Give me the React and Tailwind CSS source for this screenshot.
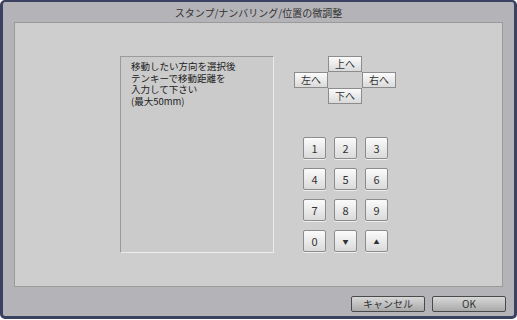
export default function App() {
  const font = { fontFamily: '"Noto Sans CJK JP", "DejaVu Sans", sans-serif' };
  const keyCls =
    "w-[23px] h-[22px] flex items-center justify-center text-[11px] text-[#333] rounded-[2px] border border-[#8c8c8c] bg-gradient-to-b from-[#fbfbfb] to-[#dadada] shadow-[0_1px_0_#eeeeee]";
  const dirCls =
    "w-[34px] h-[16px] flex items-center justify-center text-[10px] leading-none text-[#333] border border-[#8c8c8c] bg-gradient-to-b from-[#fbfbfb] to-[#dadada]";
  const bottomCls =
    "w-[74px] h-[16px] flex items-center justify-center text-[10px] leading-none text-[#333] border border-[#4a4a4a] rounded-[2px] bg-gradient-to-b from-[#d8d8d8] to-[#a9a9a9]";

  return (
    <div className="w-[517px] h-[320px] bg-white" style={font}>
      <div className="h-[319px] flex flex-col bg-[#b4b3b8] border-[#3b4160] border-x-[3px] border-t-2 border-b-[3px] rounded-[5px]">
        <div className="h-[20px] flex items-center justify-center text-[10px] text-[#333]">
          スタンプ/ナンバリング/位置の微調整
        </div>
        <div className="mx-[11px] h-[265px] flex bg-[#cecece] border border-[#9a9a9a] pt-[33px] pl-[105px]">
          <div className="w-[154px] h-[197px] bg-[#cbcbcb] border-t border-l border-[#9a9a9a] border-b-[#ececec] border-r-[#ececec] border-b border-r pt-[4px] pl-[10px] text-[9.5px] text-[#222]">
            <div className="leading-[11.5px]">移動したい方向を選択後</div>
            <div className="leading-[11.5px]">テンキーで移動距離を</div>
            <div className="leading-[11.5px]">入力して下さい</div>
            <div className="leading-[11.5px]">(最大50mm)</div>
          </div>
          <div className="ml-[20px] flex flex-col">
            <div className="grid grid-cols-[34px_34px_34px] grid-rows-[16px_16px_16px]">
              <div />
              <div className={dirCls}>上へ</div>
              <div />
              <div className={dirCls}>左へ</div>
              <div />
              <div className={dirCls}>右へ</div>
              <div />
              <div className={dirCls}>下へ</div>
              <div />
            </div>
            <div className="mt-[33px] ml-[9px] grid grid-cols-[23px_23px_23px] gap-x-[8px] gap-y-[9px]">
              {["1", "2", "3", "4", "5", "6", "7", "8", "9", "0"].map((k) => (
                <div key={k} className={keyCls}>
                  {k}
                </div>
              ))}
              <div className={keyCls}>
                <span className="text-[6px]">▼</span>
              </div>
              <div className={keyCls}>
                <span className="text-[6px]">▲</span>
              </div>
            </div>
          </div>
        </div>
        <div className="flex justify-end gap-[7px] mt-[9px] mr-[8px]">
          <div className={bottomCls}>キャンセル</div>
          <div className={bottomCls}>OK</div>
        </div>
      </div>
    </div>
  );
}
